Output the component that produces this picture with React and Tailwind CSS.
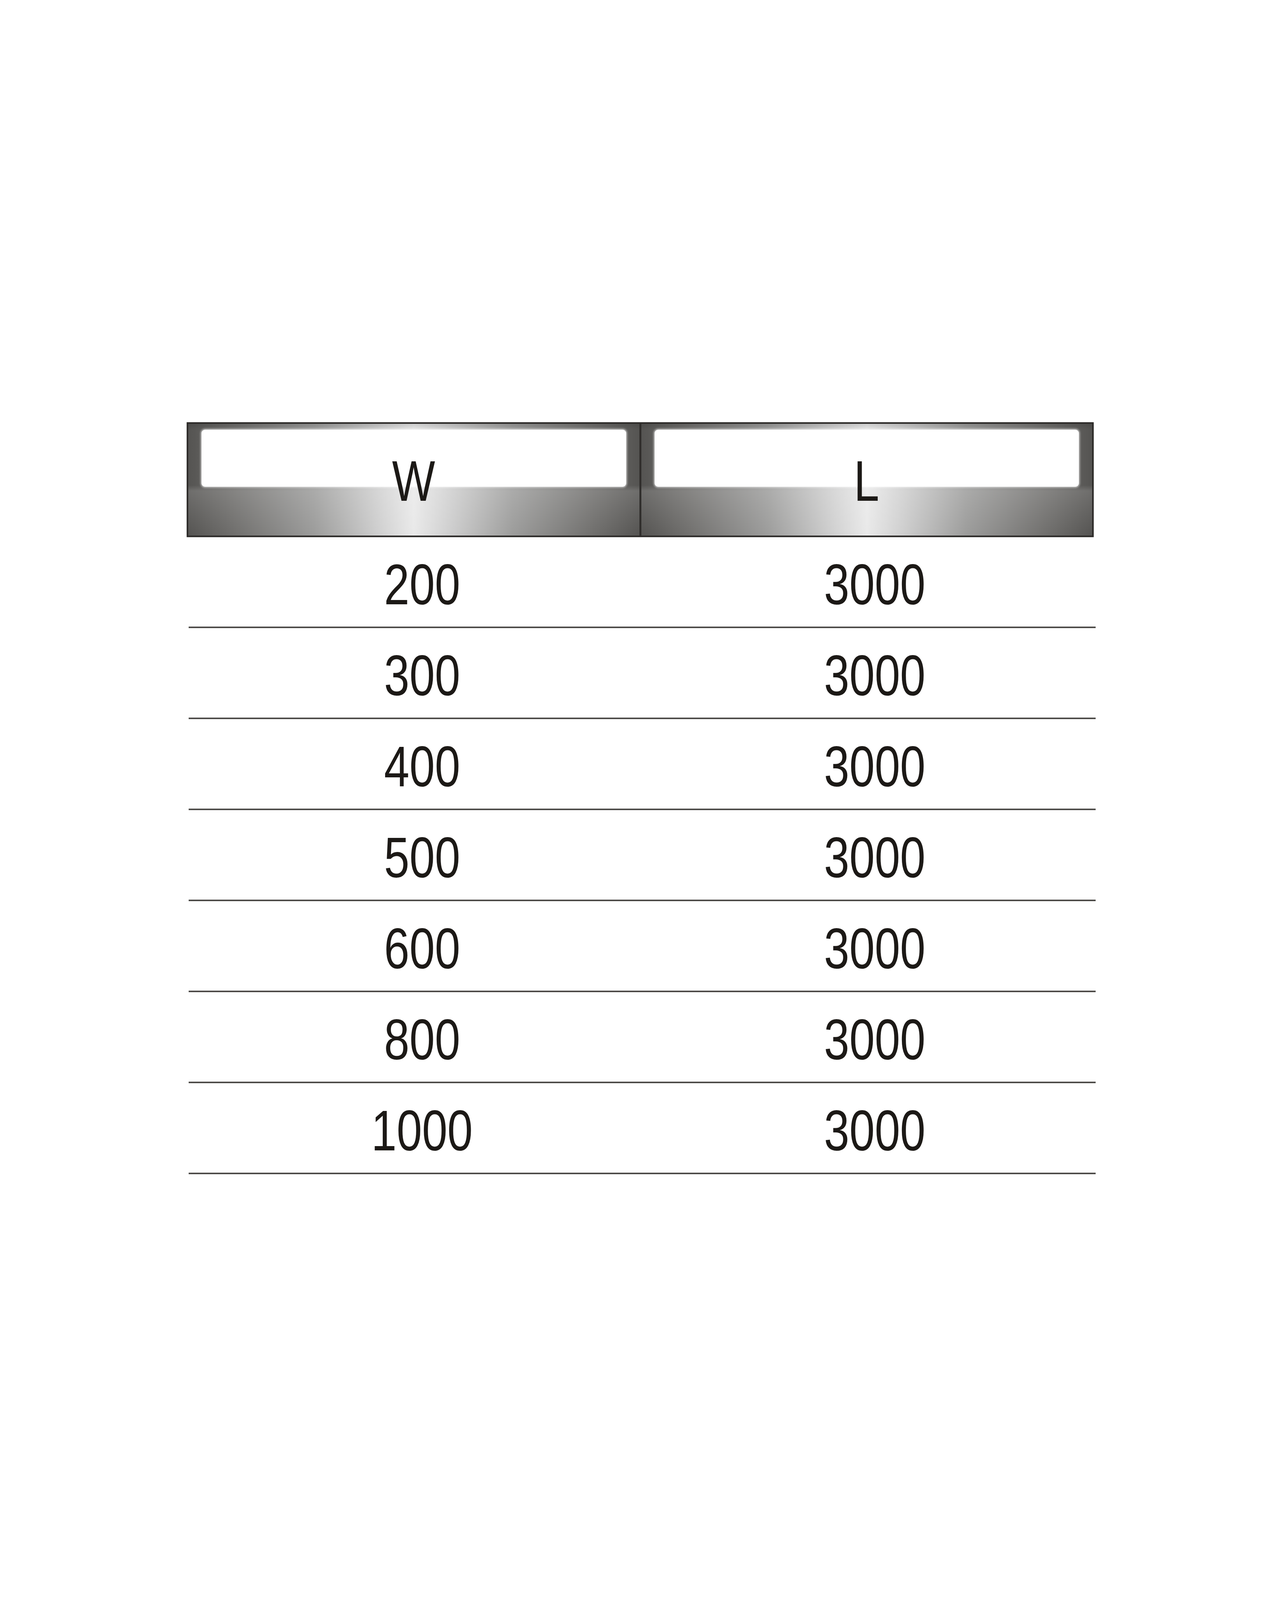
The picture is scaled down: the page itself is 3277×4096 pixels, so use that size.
import React from 'react'

const rows = ['200', '300', '400', '500', '600', '800', '1000']

const font = { fontFamily: '"Liberation Sans", Arial, sans-serif' }

function HeaderCell({ label, first }) {
  return (
    <div
      className={`grid h-full flex-1 ${first ? '' : 'border-l-[5px] border-[#302e2c]'} bg-[linear-gradient(to_right,#555452_0%,#6f6e6c_10%,#9c9c9b_28%,#d2d2d2_43%,#e9e9e9_50%,#d2d2d2_57%,#9c9c9b_72%,#6f6e6c_90%,#555452_100%)]`}
    >
      <div className='[grid-area:1/1] px-[34px] pt-[15px]'>
        <div className='h-[146px] rounded-[9px] bg-white shadow-[0_0_5px_2px_rgba(255,255,255,0.7)]' />
      </div>
      <div className='[grid-area:1/1] bg-[linear-gradient(to_bottom,rgba(0,0,0,0.12)_0%,transparent_6%,transparent_55%,rgba(255,255,255,0.15)_60%,transparent_100%)]' />
      <div className='[grid-area:1/1] flex items-center justify-center pt-[8px]'>
        <span className='inline-block scale-x-80 text-[146px] leading-none text-[#1c1916]' style={font}>
          {label}
        </span>
      </div>
    </div>
  )
}

function App() {
  return (
    <div className='min-h-screen bg-white pl-[478px] pt-[1081px]'>
      <div className='w-[2328px]'>
        <div className='flex h-[294px] w-[2322px] border-[4px] border-[#2e2c2a] shadow-[0_0_2px_rgba(0,0,0,0.4)]'>
          <HeaderCell label='W' first />
          <HeaderCell label='L' />
        </div>
        <div className='ml-[5px] w-[2322px]'>
          {rows.map((w) => (
            <div
              key={w}
              className='flex h-[233px] border-b-[4px] border-[#4e4c49]'
            >
              <div className='flex flex-1 items-center justify-center pl-[32px] pt-[14px]'>
                <span className='inline-block scale-x-80 text-[146px] leading-none text-[#1c1916]' style={font}>
                  {w}
                </span>
              </div>
              <div className='flex flex-1 items-center justify-center pl-[28px] pt-[14px]'>
                <span className='inline-block scale-x-80 text-[146px] leading-none text-[#1c1916]' style={font}>
                  3000
                </span>
              </div>
            </div>
          ))}
        </div>
      </div>
    </div>
  )
}

export default App
